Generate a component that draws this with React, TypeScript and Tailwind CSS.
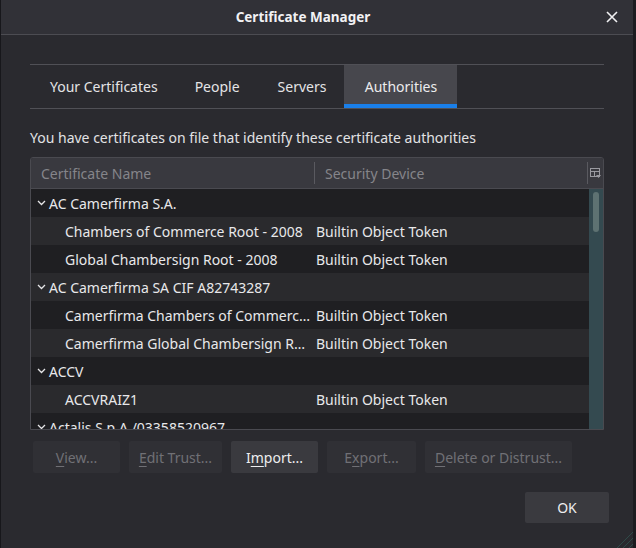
import React from "react";

type Row = {
  name: string;
  device?: string;
  parent?: boolean;
};

const rows: Row[] = [
  { name: "AC Camerfirma S.A.", parent: true },
  { name: "Chambers of Commerce Root - 2008", device: "Builtin Object Token" },
  { name: "Global Chambersign Root - 2008", device: "Builtin Object Token" },
  { name: "AC Camerfirma SA CIF A82743287", parent: true },
  { name: "Camerfirma Chambers of Commerce Root", device: "Builtin Object Token" },
  { name: "Camerfirma Global Chambersign Root", device: "Builtin Object Token" },
  { name: "ACCV", parent: true },
  { name: "ACCVRAIZ1", device: "Builtin Object Token" },
  { name: "Actalis S.p.A./03358520967", parent: true },
];

function Chevron() {
  return (
    <svg width="9" height="6" viewBox="0 0 9 6" className="shrink-0">
      <path d="M1 1 L4.5 4.5 L8 1" stroke="#e6e6e8" strokeWidth="1.3" fill="none" />
    </svg>
  );
}

function ColumnPicker() {
  return (
    <svg width="11" height="11" viewBox="0 0 11 11">
      <rect x="0.5" y="0.5" width="9" height="8" fill="none" stroke="#9a9aa0" strokeWidth="1" />
      <path d="M0.5 3.5 H9.5 M4.5 3.5 V8.5" stroke="#9a9aa0" strokeWidth="1" />
      <path d="M6 7 H11 L8.5 10 Z" fill="#9a9aa0" />
    </svg>
  );
}

function Btn({
  label,
  keyIdx,
  width,
  enabled = false,
}: {
  label: string;
  keyIdx: number;
  width: string;
  enabled?: boolean;
}) {
  return (
    <div
      className={`${width} h-[32px] rounded-[2px] flex items-center justify-center text-[14px] ${
        enabled ? "bg-[#3a3a3f] text-[#eeeef0]" : "bg-[#303035] text-[#707075]"
      }`}
    >
      {label.slice(0, keyIdx)}
      <span className="underline underline-offset-[3px]">{label[keyIdx]}</span>
      {label.slice(keyIdx + 1)}
    </div>
  );
}

export default function App() {
  return (
    <div
      className="relative w-[636px] h-[548px] bg-[#2a2a2f] flex flex-col border-l border-l-[#17171b] border-r-[3px] border-r-[#1c1c20] overflow-hidden"
      style={{ fontFamily: '"Noto Sans", "Open Sans", sans-serif' }}
    >
      {/* Title bar */}
      <div className="relative h-[35px] shrink-0 bg-[#313137] border-b border-[#4c4c52] flex items-center justify-center pr-[28px]">
        <span className="text-[13.5px] font-bold text-[#f2f2f4]">Certificate Manager</span>
        <svg width="12" height="12" viewBox="0 0 12 12" className="absolute right-[15px] top-[11px]">
          <path d="M1 1 L11 11 M11 1 L1 11" stroke="#f0f0f2" strokeWidth="1.6" />
        </svg>
      </div>

      <div className="flex flex-col pl-[29px] pr-[29px]">
        {/* Tabs */}
        <div className="mt-[29px] h-[45px] border-t border-b border-[#505056] flex">
          <div className="pl-[20px] pr-[18px] flex items-center text-[14px] text-[#e4e4e6]">Your Certificates</div>
          <div className="px-[19px] flex items-center text-[14px] text-[#e4e4e6]">People</div>
          <div className="px-[19px] flex items-center text-[14px] text-[#e4e4e6]">Servers</div>
          <div className="relative -ml-[1px] flex items-center text-[14px] text-[#ececee] bg-[#47474d] w-[113px] justify-center">
            Authorities
            <div className="absolute left-0 right-0 bottom-0 h-[4px] bg-[#1a7fe9]" />
          </div>
        </div>

        <div className="mt-[19px] text-[14px] leading-[20px] text-[#e2e2e4]">
          You have certificates on file that identify these certificate authorities
        </div>

        {/* Tree */}
        <div className="mt-[9px] h-[273px] border border-[#4a4a50] rounded-t-[3px] flex flex-col overflow-hidden">
          <div className="h-[31px] shrink-0 bg-[#39393f] border-b border-[#4a4a50] flex items-center text-[14px] text-[#85858a]">
            <div className="w-[283px] pl-[10px] h-full flex items-center">Certificate Name</div>
            <div className="w-px h-[22px] bg-[#5a5a60]" />
            <div className="flex-1 pl-[10px]">Security Device</div>
            <div className="w-px h-[22px] bg-[#5a5a60]" />
            <div className="w-[15px] flex items-center justify-center">
              <ColumnPicker />
            </div>
          </div>
          <div className="flex flex-1 overflow-hidden">
            <div className="flex-1 flex flex-col">
              {rows.map((r, i) => (
                <div
                  key={r.name}
                  className={`h-[28px] shrink-0 flex items-center text-[14px] text-[#e8e8ea] ${
                    i % 2 === 0 ? "bg-[#1f1f22]" : "bg-[#2a2a2d]"
                  }`}
                >
                  {r.parent ? (
                    <div className="flex items-center gap-[3px] pl-[6px]">
                      <Chevron />
                      <span className="whitespace-nowrap">{r.name}</span>
                    </div>
                  ) : (
                    <>
                      <div className="w-[285px] pl-[34px] pr-[4px] truncate">{r.name}</div>
                      <div className="whitespace-nowrap">{r.device}</div>
                    </>
                  )}
                </div>
              ))}
            </div>
            <div className="w-[14px] bg-[#344a50] flex justify-center pt-[3px]">
              <div className="w-[6px] h-[40px] rounded-full bg-[#5e7272]" />
            </div>
          </div>
        </div>

        {/* Action buttons */}
        <div className="mt-[11px] pl-[3px] flex gap-[9px]">
          <Btn label="View..." keyIdx={0} width="w-[87px]" />
          <Btn label="Edit Trust..." keyIdx={0} width="w-[93px]" />
          <Btn label="Import..." keyIdx={1} width="w-[87px]" enabled />
          <Btn label="Export..." keyIdx={1} width="w-[89px]" />
          <Btn label="Delete or Distrust..." keyIdx={0} width="w-[147px]" />
        </div>

        <div className="mt-[19px] flex justify-end mr-[-5px]">
          <div className="w-[84px] h-[31px] rounded-[2px] bg-[#3a3a3f] text-[14px] text-[#eeeef0] flex items-center justify-center">
            OK
          </div>
        </div>
      </div>

      {/* resize grip */}
      <svg width="20" height="20" viewBox="0 0 20 20" className="absolute right-0 bottom-0">
        <path d="M20 4 L4 20 M20 10 L10 20 M20 16 L16 20" stroke="#2f4a48" strokeWidth="1" />
      </svg>
    </div>
  );
}
